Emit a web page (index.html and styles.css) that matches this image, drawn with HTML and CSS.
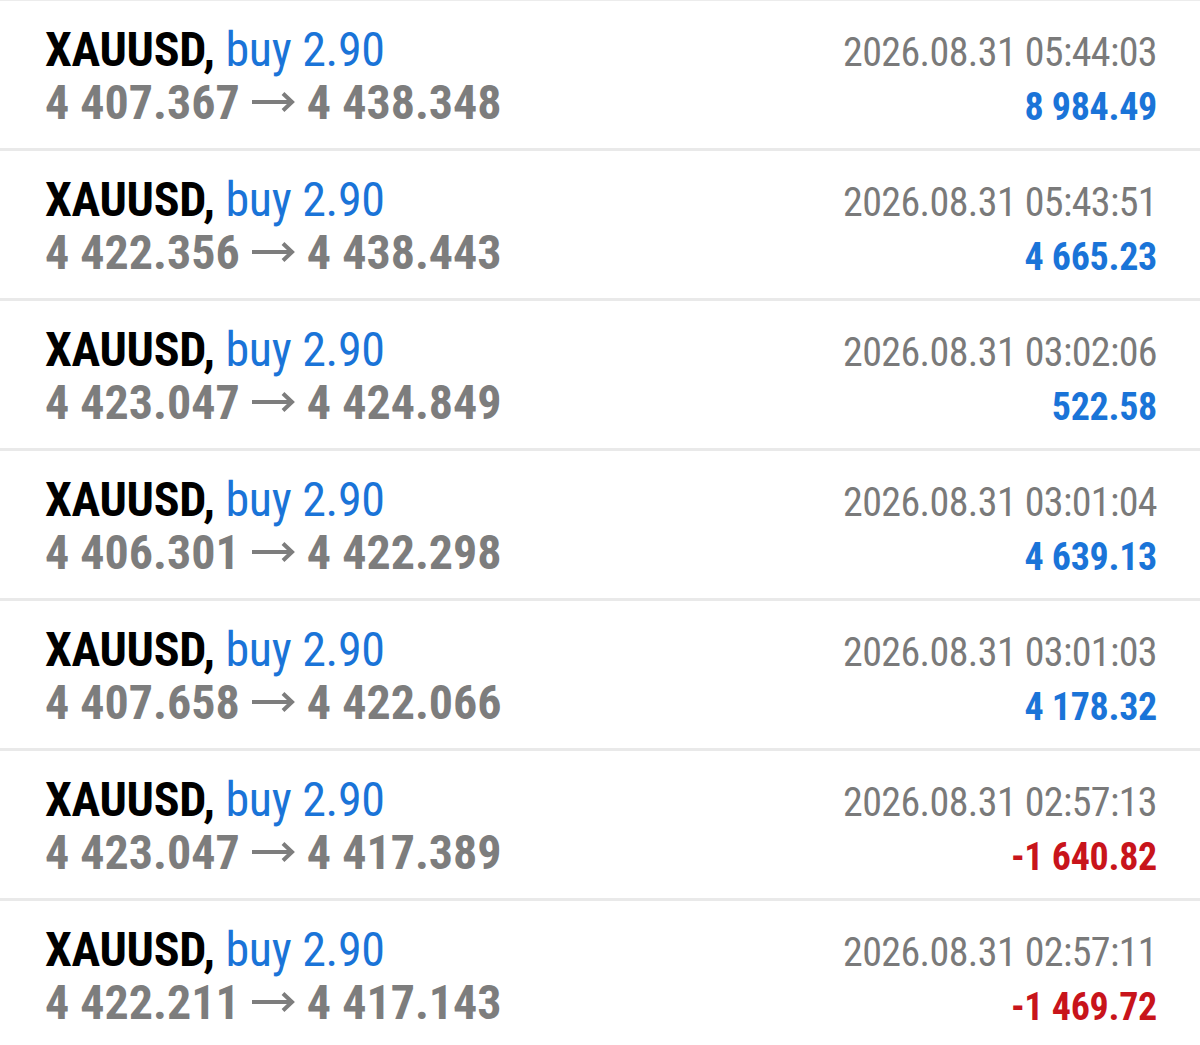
FILE: index.html
```html
<!DOCTYPE html>
<html>
<head>
<meta charset="utf-8">
<link rel="stylesheet" href="styles.css">
</head>
<body>
<div class="list">
  <div class="deal">
    <div class="main">
      <div class="title"><span class="sym">XAUUSD,</span> <span class="side">buy 2.90</span></div>
      <div class="prices">4 407.367<svg class="arrow" viewBox="0 0 43 20" width="43" height="20" aria-label="→"><path d="M0 10H40M31 1.5L40 10L31 18.5"/></svg>4 438.348</div>
    </div>
    <div class="meta">
      <div class="time">2026.08.31 05:44:03</div>
      <div class="profit">8 984.49</div>
    </div>
  </div>
  <div class="deal">
    <div class="main">
      <div class="title"><span class="sym">XAUUSD,</span> <span class="side">buy 2.90</span></div>
      <div class="prices">4 422.356<svg class="arrow" viewBox="0 0 43 20" width="43" height="20" aria-label="→"><path d="M0 10H40M31 1.5L40 10L31 18.5"/></svg>4 438.443</div>
    </div>
    <div class="meta">
      <div class="time">2026.08.31 05:43:51</div>
      <div class="profit">4 665.23</div>
    </div>
  </div>
  <div class="deal">
    <div class="main">
      <div class="title"><span class="sym">XAUUSD,</span> <span class="side">buy 2.90</span></div>
      <div class="prices">4 423.047<svg class="arrow" viewBox="0 0 43 20" width="43" height="20" aria-label="→"><path d="M0 10H40M31 1.5L40 10L31 18.5"/></svg>4 424.849</div>
    </div>
    <div class="meta">
      <div class="time">2026.08.31 03:02:06</div>
      <div class="profit">522.58</div>
    </div>
  </div>
  <div class="deal">
    <div class="main">
      <div class="title"><span class="sym">XAUUSD,</span> <span class="side">buy 2.90</span></div>
      <div class="prices">4 406.301<svg class="arrow" viewBox="0 0 43 20" width="43" height="20" aria-label="→"><path d="M0 10H40M31 1.5L40 10L31 18.5"/></svg>4 422.298</div>
    </div>
    <div class="meta">
      <div class="time">2026.08.31 03:01:04</div>
      <div class="profit">4 639.13</div>
    </div>
  </div>
  <div class="deal">
    <div class="main">
      <div class="title"><span class="sym">XAUUSD,</span> <span class="side">buy 2.90</span></div>
      <div class="prices">4 407.658<svg class="arrow" viewBox="0 0 43 20" width="43" height="20" aria-label="→"><path d="M0 10H40M31 1.5L40 10L31 18.5"/></svg>4 422.066</div>
    </div>
    <div class="meta">
      <div class="time">2026.08.31 03:01:03</div>
      <div class="profit">4 178.32</div>
    </div>
  </div>
  <div class="deal">
    <div class="main">
      <div class="title"><span class="sym">XAUUSD,</span> <span class="side">buy 2.90</span></div>
      <div class="prices">4 423.047<svg class="arrow" viewBox="0 0 43 20" width="43" height="20" aria-label="→"><path d="M0 10H40M31 1.5L40 10L31 18.5"/></svg>4 417.389</div>
    </div>
    <div class="meta">
      <div class="time">2026.08.31 02:57:13</div>
      <div class="profit loss">-1 640.82</div>
    </div>
  </div>
  <div class="deal">
    <div class="main">
      <div class="title"><span class="sym">XAUUSD,</span> <span class="side">buy 2.90</span></div>
      <div class="prices">4 422.211<svg class="arrow" viewBox="0 0 43 20" width="43" height="20" aria-label="→"><path d="M0 10H40M31 1.5L40 10L31 18.5"/></svg>4 417.143</div>
    </div>
    <div class="meta">
      <div class="time">2026.08.31 02:57:11</div>
      <div class="profit loss">-1 469.72</div>
    </div>
  </div>
</div>
</body>
</html>
```
FILE: styles.css
```css
html, body {
  margin: 0;
  padding: 0;
  background: #ffffff;
}
body {
  font-family: Roboto, "Noto Sans", sans-serif;
  font-stretch: condensed;
  white-space: nowrap;
}
.list {
  border-top: 1px solid #ececec;
}
.deal {
  display: flex;
  justify-content: space-between;
  align-items: flex-start;
  box-sizing: border-box;
  height: 150px;
  padding: 22px 43px 0 45px;
  border-bottom: 3px solid #e9e9e9;
}
.main, .meta {
  display: flex;
  flex-direction: column;
}
.meta {
  align-items: flex-end;
  padding-top: 3px;
}
.title, .prices, .time, .profit {
  height: 53px;
  line-height: 53px;
}
.title {
  font-size: 48px;
  letter-spacing: -0.3px;
}
.sym {
  font-weight: 700;
  color: #000000;
}
.side {
  font-weight: 400;
  color: #1a74d8;
}
.prices {
  font-size: 48px;
  font-weight: 700;
  color: #7d7d7d;
}
.arrow {
  display: inline-block;
  vertical-align: 7px;
  margin: 0 12px 0 12px;
  fill: none;
  stroke: #7d7d7d;
  stroke-width: 4;
}
.time {
  font-size: 40px;
  letter-spacing: -0.6px;
  color: #7a7a7a;
}
.profit {
  margin-top: 2px;
  font-size: 38px;
  letter-spacing: -0.3px;
  font-weight: 700;
  color: #1a74d8;
}
.profit.loss {
  color: #c8141b;
}
```
